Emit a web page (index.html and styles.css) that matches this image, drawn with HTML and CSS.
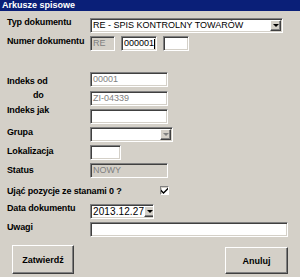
FILE: index.html
```html
<!DOCTYPE html>
<html>
<head>
<meta charset="utf-8">
<link rel="stylesheet" href="styles.css">
</head>
<body>
<div class="window">
  <div class="title">Arkusze spisowe</div>
  <div class="form">
    <div class="row r-typ">
      <span class="label l-m1">Typ dokumentu</span>
      <div class="field combo w-typ"><span class="val">RE - SPIS KONTROLNY TOWARÓW</span><span class="drop"><i class="tri"></i></span></div>
    </div>
    <div class="row r-gap3">
      <span class="label">Numer dokumentu</span>
      <div class="field disabled w-re"><span class="val grey">RE</span></div>
      <div class="field w-num"><span class="val">000001</span><span class="caret"></span></div>
      <div class="field w-small"></div>
    </div>
    <div class="row r-od">
      <span class="label l-p4">Indeks od</span>
      <div class="field w-mid"><span class="val grey">00001</span></div>
    </div>
    <div class="row r-gap4">
      <span class="label l-m1 l-do">do</span>
      <div class="field w-mid"><span class="val grey">ZI-04339</span></div>
    </div>
    <div class="row r-gap3">
      <span class="label l-m4">Indeks jak</span>
      <div class="field w-mid"></div>
    </div>
    <div class="row r-gap3">
      <span class="label">Grupa</span>
      <div class="field combo w-grupa"><span class="val"></span><span class="drop"><i class="tri tri-off"></i></span></div>
    </div>
    <div class="row r-gap3">
      <span class="label l-p1">Lokalizacja</span>
      <div class="field w-lok"></div>
    </div>
    <div class="row r-gap3">
      <span class="label l-p2">Status</span>
      <div class="field disabled w-mid"><span class="val grey">NOWY</span></div>
    </div>
    <div class="row check-row">
      <span class="label l-check">Ująć pozycje ze stanami 0 ?</span>
      <span class="checkbox"><svg width="7" height="7" viewBox="0 0 7 7"><path d="M0 2.5 L2.5 5 L7 0.5 L7 2.5 L2.5 7 L0 4.5 Z" fill="#000"/></svg></span>
    </div>
    <div class="row r-data">
      <span class="label l-m1">Data dokumentu</span>
      <div class="field combo w-data"><span class="val dark">2013.12.27</span><span class="drop"><i class="tri"></i></span></div>
    </div>
    <div class="row r-gap3">
      <span class="label">Uwagi</span>
      <div class="field w-uwagi"></div>
    </div>
    <div class="buttons">
      <button class="btn btn-ok">Zatwierdź</button>
      <button class="btn btn-cancel">Anuluj</button>
    </div>
  </div>
</div>
</body>
</html>
```

FILE: styles.css
```css
html, body {
  margin: 0;
  padding: 0;
}
body {
  width: 300px;
  height: 277px;
  background: #d4d0c8;
  font-family: "Liberation Sans", Arial, sans-serif;
  font-size: 9px;
  color: #000;
  overflow: hidden;
}
.window {
  width: 300px;
  height: 277px;
}
.title {
  height: 11px;
  line-height: 11px;
  background: #0a1f78;
  color: #fff;
  font-weight: bold;
  padding-left: 2px;
}
.form {
  padding: 0 12px 0 7px;
}
.row {
  display: flex;
  align-items: flex-start;
  height: 15px;
}
.r-typ { margin-top: 7px; }
.r-gap3 { margin-top: 3px; }
.r-gap4 { margin-top: 4px; }
.r-od { margin-top: 21px; }
.r-data { margin-top: 7px; }
.label {
  flex: none;
  width: 83px;
  font-weight: bold;
  line-height: 11px;
  white-space: nowrap;
  letter-spacing: -0.15px;
}
.l-m1 { margin-top: -1px; }
.l-m4 { margin-top: -4px; }
.l-p1 { margin-top: 1px; }
.l-p2 { margin-top: 2px; }
.l-p4 { margin-top: 4px; }
.l-do { padding-left: 26px; width: 57px; }
.field {
  box-sizing: border-box;
  height: 15px;
  background: #fff;
  border: 1px solid;
  border-color: #808080 #fff #fff #808080;
  box-shadow: inset 1px 1px 0 #404040, inset -1px -1px 0 #d4d0c8;
  padding: 1px 1px 1px 2px;
  display: flex;
  align-items: center;
  line-height: 11px;
  white-space: nowrap;
  overflow: hidden;
}
.field + .field { margin-left: 6px; }
.disabled { background: #d4d0c8; }
.grey { color: #808080; }
.val { flex: 1; }
.dark { font-size: 10px; letter-spacing: 0.1px; }
.caret {
  width: 0;
  height: 10px;
  border-left: 1px solid #000;
  margin-right: 2px;
}
.w-typ { width: 193px; }
.w-re { width: 25px; }
.w-num { width: 36px; }
.w-num .val { flex: none; }
.w-small { width: 26px; }
.w-mid { width: 78px; }
.w-grupa { width: 83px; }
.w-lok { width: 31px; }
.w-data { width: 64px; }
.w-uwagi { width: 198px; }
.combo { padding-right: 1px; }
.drop {
  flex: none;
  box-sizing: border-box;
  width: 11px;
  height: 11px;
  background: #d4d0c8;
  border: 1px solid;
  border-color: #fff #404040 #404040 #fff;
  box-shadow: inset -1px -1px 0 #808080;
  display: flex;
  align-items: center;
  justify-content: center;
}
.tri {
  width: 0;
  height: 0;
  border-left: 3px solid transparent;
  border-right: 3px solid transparent;
  border-top: 3px solid #000;
}
.tri-off { border-top-color: #808080; }
.check-row {
  margin-top: 8px;
  height: 11px;
}
.l-check {
  width: 153px;
}
.checkbox {
  box-sizing: border-box;
  width: 9px;
  height: 9px;
  background: #fff;
  border: 1px solid;
  border-color: #808080 #fff #fff #808080;
  box-shadow: inset 1px 1px 0 #d4d0c8;
  display: flex;
  align-items: center;
  justify-content: center;
}
.checkbox svg { display: block; }
.buttons {
  display: flex;
  justify-content: space-between;
  align-items: flex-end;
  margin-top: 8px;
}
.btn {
  box-sizing: border-box;
  font-family: "Liberation Sans", Arial, sans-serif;
  font-size: 9px;
  font-weight: bold;
  color: #000;
  background: #d4d0c8;
  border: 1px solid;
  border-color: #fff #404040 #404040 #fff;
  box-shadow: inset -1px -1px 0 #808080;
  padding: 0;
  margin: 0;
}
.btn-ok {
  width: 62px;
  height: 29px;
  margin-left: 5px;
}
.btn-cancel {
  width: 63px;
  height: 27px;
}
```
